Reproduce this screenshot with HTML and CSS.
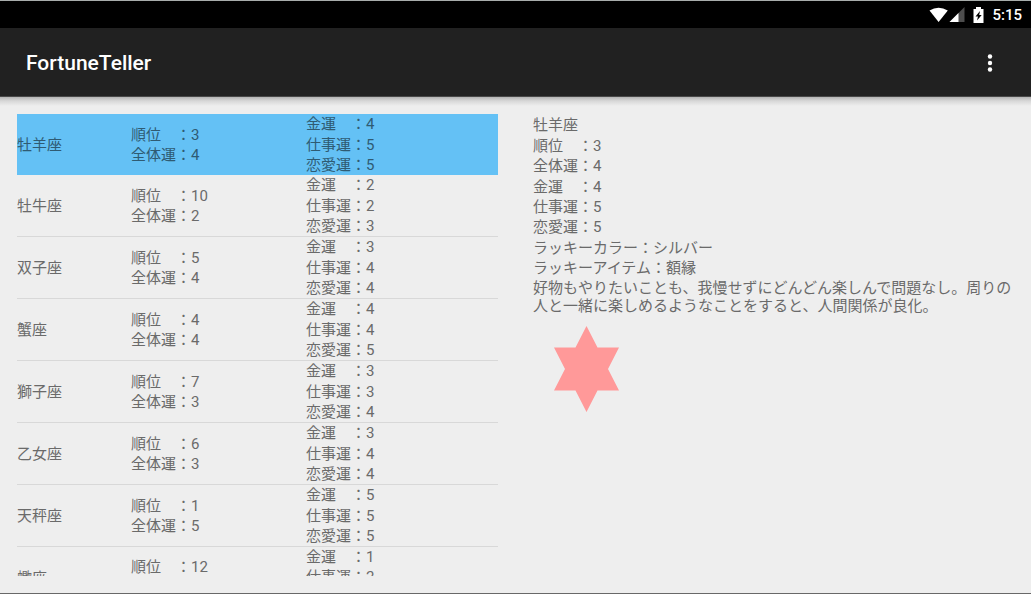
FILE: index.html
```html
<!DOCTYPE html>
<html lang="ja">
<head>
<meta charset="utf-8">
<title>FortuneTeller</title>
<link rel="stylesheet" href="styles.css">
</head>
<body>
<div class="status-bar">
  <svg class="icon-wifi" width="20" height="16" viewBox="0 0 20 16" aria-hidden="true"><path d="M0.5 3.5Q9.500-1.900 18.800 3.500L9.600 15Z" fill="#fff"/></svg>
  <svg class="icon-signal" width="16" height="16" viewBox="0 0 16 16" aria-hidden="true"><path d="M15.500 0V15H0.500Z" fill="#4d4d4d"/><path d="M9.500 6V15H0.500Z" fill="#fff"/></svg>
  <svg class="icon-battery" width="11" height="16" viewBox="0 0 11 16" aria-hidden="true"><path d="M3 0H8V2H10.500V16H0.500V2H3Z" fill="#fff"/><path d="M7 4L2.500 9.500H5L4 13.500L8.700 8H6.200Z" fill="#000"/></svg>
  <span class="clock">5:15</span>
</div>
<header class="action-bar">
  <h1 class="title">FortuneTeller</h1>
  <button class="overflow" type="button" aria-label="メニュー"><svg width="6" height="20" viewBox="0 0 6 20" aria-hidden="true"><g fill="#fff"><circle cx="3" cy="3.500" r="2.200"/><circle cx="3" cy="10" r="2.200"/><circle cx="3" cy="16.500" r="2.200"/></g></svg></button>
</header>
<main class="content">
  <ul class="signs">
    <li class="sign selected"><div class="cell"><span>牡羊座</span></div><div class="cell"><span>順位　：3</span><span>全体運：4</span></div><div class="cell spread"><span>金運　：4</span><span>仕事運：5</span><span>恋愛運：5</span></div></li>
    <li class="sign"><div class="cell"><span>牡牛座</span></div><div class="cell"><span>順位　：10</span><span>全体運：2</span></div><div class="cell spread"><span>金運　：2</span><span>仕事運：2</span><span>恋愛運：3</span></div></li>
    <li class="sign"><div class="cell"><span>双子座</span></div><div class="cell"><span>順位　：5</span><span>全体運：4</span></div><div class="cell spread"><span>金運　：3</span><span>仕事運：4</span><span>恋愛運：4</span></div></li>
    <li class="sign"><div class="cell"><span>蟹座</span></div><div class="cell"><span>順位　：4</span><span>全体運：4</span></div><div class="cell spread"><span>金運　：4</span><span>仕事運：4</span><span>恋愛運：5</span></div></li>
    <li class="sign"><div class="cell"><span>獅子座</span></div><div class="cell"><span>順位　：7</span><span>全体運：3</span></div><div class="cell spread"><span>金運　：3</span><span>仕事運：3</span><span>恋愛運：4</span></div></li>
    <li class="sign"><div class="cell"><span>乙女座</span></div><div class="cell"><span>順位　：6</span><span>全体運：3</span></div><div class="cell spread"><span>金運　：3</span><span>仕事運：4</span><span>恋愛運：4</span></div></li>
    <li class="sign"><div class="cell"><span>天秤座</span></div><div class="cell"><span>順位　：1</span><span>全体運：5</span></div><div class="cell spread"><span>金運　：5</span><span>仕事運：5</span><span>恋愛運：5</span></div></li>
    <li class="sign"><div class="cell"><span>蠍座</span></div><div class="cell lead"><span>順位　：12</span></div><div class="cell top"><span>金運　：1</span><span>仕事運：2</span></div></li>
  </ul>
  <section class="detail">
    <h2 class="name">牡羊座</h2>
    <div class="group"><p>順位　：3</p><p>全体運：4</p></div>
    <div class="group"><p>金運　：4</p><p>仕事運：5</p><p>恋愛運：5</p></div>
    <div class="group"><p>ラッキーカラー：シルバー</p><p>ラッキーアイテム：額縁</p></div>
    <p class="message">好物もやりたいことも、我慢せずにどんどん楽しんで問題なし。周りの人と一緒に楽しめるようなことをすると、人間関係が良化。</p>
    <svg class="star" width="66" height="86" viewBox="0 0 66 86" aria-hidden="true"><path d="M32.500 0L43.500 21.500H65L54 43L65 64.500H43.500L32.500 86L21.500 64.500H0L11 43L0 21.500H21.500Z" fill="#ff9999"/></svg>
  </section>
</main>
</body>
</html>
```
FILE: styles.css
```css
* {
  box-sizing: border-box;
}

body {
  margin: 0;
  height: 100vh;
  display: flex;
  flex-direction: column;
  overflow: hidden;
  border-top: 1px solid #a8adab;
  border-bottom: 1px solid #686868;
  background: #eeeeee;
  color: #6a6a6a;
  font-family: Roboto, "Noto Sans CJK JP", sans-serif;
  font-size: 15px;
  line-height: 20px;
}

h1, h2, p, ul {
  margin: 0;
  padding: 0;
}

.status-bar {
  display: flex;
  flex: none;
  align-items: center;
  justify-content: flex-end;
  height: 27px;
  padding-right: 9px;
  background: #000;
  color: #fff;
}

.icon-signal {
  margin-right: 8px;
}

.clock {
  margin-left: 8px;
  font-weight: 500;
}

.action-bar {
  display: flex;
  flex: none;
  align-items: center;
  justify-content: space-between;
  height: 69px;
  padding: 2px 31px 0 26px;
  border-bottom: 1px solid #484848;
  background: #212121;
  color: #fff;
}

.title {
  font-size: 21px;
  line-height: 28px;
  font-weight: 500;
}

.overflow {
  display: flex;
  justify-content: center;
  width: 20px;
  padding: 0;
  border: 0;
  background: none;
}

.content {
  display: grid;
  flex: 1;
  grid-template-columns: 1fr 1fr;
  grid-template-rows: minmax(0, 1fr);
  gap: 35px;
  min-height: 0;
  padding: 17px;
  background: linear-gradient(#b4b4b4, #d8d8d8 4px, #eeeeee 9px);
}

.signs {
  overflow: hidden;
  list-style: none;
}

.sign {
  display: grid;
  grid-template-columns: 114fr 175fr 192fr;
  height: 62px;
  border-bottom: 1px solid #d8d8d8;
}

.selected {
  height: 61px;
  border-bottom: 0;
  background: #64c1f5;
  color: #2f5b73;
}

.cell {
  display: flex;
  flex-direction: column;
  justify-content: center;
}

.spread {
  justify-content: space-between;
}

.lead {
  justify-content: flex-start;
  padding-top: 10px;
}

.top {
  justify-content: flex-start;
}

.detail {
  display: flex;
  flex-direction: column;
  align-items: flex-start;
  gap: 1px;
  padding-top: 1px;
}

.name {
  font-size: 15px;
  font-weight: 400;
}

.message {
  line-height: 18px;
}

.star {
  margin: 10px 0 0 21px;
}
```
